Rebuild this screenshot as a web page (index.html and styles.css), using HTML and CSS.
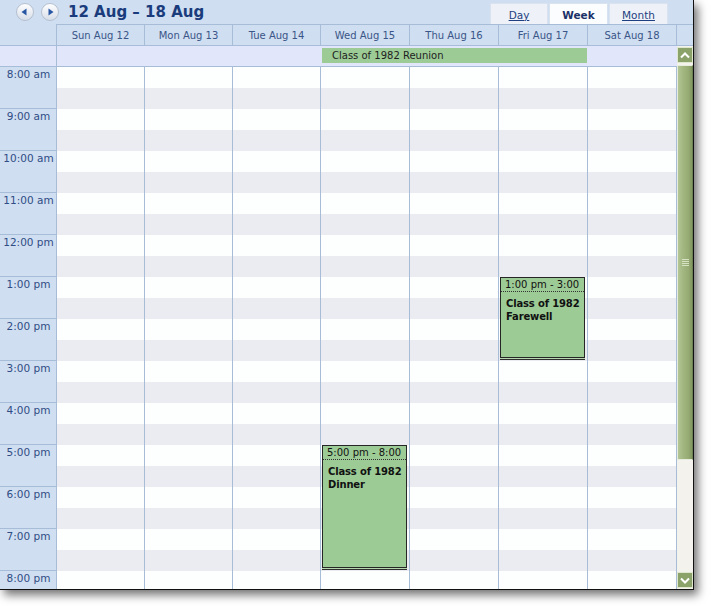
FILE: index.html
```html
<!DOCTYPE html>
<html lang="en">
<head>
<meta charset="utf-8">
<title>Week view</title>
<link rel="stylesheet" href="styles.css">
</head>
<body>
<div class="window">
  <div class="toolbar">
    <button class="nav" aria-label="Previous week">
      <svg width="18" height="18" viewBox="0 0 18 18"><defs><linearGradient id="g1" x1="0" y1="0" x2="0" y2="1"><stop offset="0" stop-color="#ffffff"/><stop offset="1" stop-color="#d6dde8"/></linearGradient></defs><circle cx="9" cy="9" r="8.5" fill="url(#g1)" stroke="#b3bfd0"/><path d="M5.5 9 L10.5 5.5 L10.5 12.5 Z" fill="#2856a3"/></svg>
    </button>
    <button class="nav" aria-label="Next week">
      <svg width="18" height="18" viewBox="0 0 18 18"><defs><linearGradient id="g2" x1="0" y1="0" x2="0" y2="1"><stop offset="0" stop-color="#ffffff"/><stop offset="1" stop-color="#d6dde8"/></linearGradient></defs><circle cx="9" cy="9" r="8.5" fill="url(#g2)" stroke="#b3bfd0"/><path d="M12.5 9 L7.5 5.5 L7.5 12.5 Z" fill="#2856a3"/></svg>
    </button>
    <h1 class="range">12 Aug – 18 Aug</h1>
    <div class="views">
      <a class="view" href="#">Day</a>
      <span class="view active">Week</span>
      <a class="view" href="#">Month</a>
    </div>
  </div>

  <div class="heads">
    <div class="corner"></div>
    <div class="day-heads">
      <div class="day-head">Sun Aug 12</div>
      <div class="day-head">Mon Aug 13</div>
      <div class="day-head">Tue Aug 14</div>
      <div class="day-head">Wed Aug 15</div>
      <div class="day-head">Thu Aug 16</div>
      <div class="day-head">Fri Aug 17</div>
      <div class="day-head">Sat Aug 18</div>
    </div>
    <div class="scroll-corner"></div>
  </div>

  <div class="main">
    <div class="allday-gutter"></div>
    <div class="allday">
      <div class="allday-event">Class of 1982 Reunion</div>
    </div>
    <div class="scrollbar">
      <div class="sb-btn"><svg width="10" height="7" viewBox="0 0 10 7"><path d="M1 5.5 L5 1.5 L9 5.5" fill="none" stroke="#ffffff" stroke-width="2"/></svg></div>
      <div class="sb-thumb"><span class="grip"></span></div>
      <div class="sb-track"></div>
      <div class="sb-btn"><svg width="10" height="7" viewBox="0 0 10 7"><path d="M1 1.5 L5 5.5 L9 1.5" fill="none" stroke="#ffffff" stroke-width="2"/></svg></div>
    </div>
    <div class="times">
      <div class="hour">8:00 am</div>
      <div class="hour">9:00 am</div>
      <div class="hour">10:00 am</div>
      <div class="hour">11:00 am</div>
      <div class="hour">12:00 pm</div>
      <div class="hour">1:00 pm</div>
      <div class="hour">2:00 pm</div>
      <div class="hour">3:00 pm</div>
      <div class="hour">4:00 pm</div>
      <div class="hour">5:00 pm</div>
      <div class="hour">6:00 pm</div>
      <div class="hour">7:00 pm</div>
      <div class="hour">8:00 pm</div>
    </div>
    <div class="days">
      <div class="day"></div>
      <div class="day"></div>
      <div class="day"></div>
      <div class="day">
        <div class="event" style="top:378px;height:123px">
          <div class="event-time">5:00 pm - 8:00</div>
          <div class="event-title">Class of 1982 Dinner</div>
        </div>
      </div>
      <div class="day"></div>
      <div class="day">
        <div class="event" style="top:210px;height:81px">
          <div class="event-time">1:00 pm - 3:00</div>
          <div class="event-title">Class of 1982 Farewell</div>
        </div>
      </div>
      <div class="day"></div>
    </div>
  </div>
</div>
</body>
</html>
```

FILE: styles.css
```css
* { box-sizing: border-box; }

html, body {
  margin: 0;
  padding: 0;
  background: #ffffff;
}

body {
  font-family: "DejaVu Sans", Verdana, sans-serif;
  font-size: 10px;
  color: #1a1a1a;
  min-height: 606px;
}

.window {
  width: 694px;
  height: 590px;
  background: #cfdef1;
  border-right: 1px solid #111111;
  border-bottom: 1px solid #111111;
  box-shadow: 4px 5px 9px rgba(0, 0, 0, 0.55);
  overflow: hidden;
  display: flex;
  flex-direction: column;
}

/* toolbar */
.toolbar {
  height: 24px;
  display: flex;
  align-items: center;
  padding-left: 16px;
  gap: 7px;
  flex: none;
}

.nav {
  width: 18px;
  height: 18px;
  padding: 0;
  margin: 0;
  border: 0;
  background: none;
  display: block;
}

.nav svg { display: block; }

.range {
  margin: 0 0 0 2px;
  font-size: 15px;
  font-weight: bold;
  color: #1a3c7c;
  line-height: 18px;
  white-space: nowrap;
}

.views {
  margin-left: auto;
  margin-right: 25px;
  align-self: flex-end;
  display: flex;
  gap: 1px;
}

.view {
  width: 59px;
  height: 21px;
  display: flex;
  align-items: center;
  justify-content: center;
  font-size: 10.5px;
  color: #1e3f80;
  background: #eef2f8;
  border: 1px solid #d9e3f0;
  border-bottom: 0;
  text-decoration: underline;
  padding-top: 1px;
}

.view:first-child { width: 58px; }

.view.active {
  background: #fcfdfe;
  font-weight: bold;
  text-decoration: none;
  color: #1a3268;
}

/* column heads */
.heads {
  height: 22px;
  display: grid;
  grid-template-columns: 57px 620px 16px;
  border-bottom: 1px solid #a7bcd7;
  flex: none;
}

.corner {
  border-right: 1px solid #a7bcd7;
}

.day-heads {
  display: grid;
  grid-template-columns: 88px 88px 88px 89px 89px 89px 89px;
  border-top: 1px solid #a7bcd7;
}

.day-head {
  border-right: 1px solid #a7bcd7;
  display: flex;
  align-items: center;
  justify-content: center;
  color: #3a5587;
  font-size: 10px;
  padding-top: 1px;
}

.scroll-corner {
  border-top: 1px solid #a7bcd7;
}

/* main area */
.main {
  flex: 1;
  display: grid;
  grid-template-columns: 57px 620px 16px;
  grid-template-rows: 21px 1fr;
  overflow: hidden;
}

.allday-gutter {
  background: #e1e6fb;
  border-right: 1px solid #a7bcd7;
  border-bottom: 1px solid #a7bcd7;
}

.allday {
  background: #e1e6fb;
  border-bottom: 1px solid #a7bcd7;
  display: grid;
  grid-template-columns: 88px 88px 88px 89px 89px 89px 89px;
  align-items: start;
}

.allday-event {
  grid-column: 4 / span 3;
  margin: 2px 1px 0 1px;
  height: 15px;
  background: #9dcb96;
  color: #1e1e1e;
  font-size: 10px;
  line-height: 15px;
  padding-left: 10px;
  white-space: nowrap;
}

/* scrollbar */
.scrollbar {
  grid-column: 3;
  grid-row: 1 / span 2;
  background: #f3f2ec;
  display: flex;
  flex-direction: column;
  padding-top: 1px;
  padding-bottom: 1px;
}

.sb-btn {
  height: 16px;
  flex: none;
  background: #8ba26b;
  border: 1px solid #dfe7cf;
  display: flex;
  align-items: center;
  justify-content: center;
}

.sb-thumb {
  margin-top: 2px;
  height: 395px;
  flex: none;
  border: 1px solid #e7eddc;
  border-right-color: #6e8355;
  background: linear-gradient(to right, #b3c596 0%, #a2b781 35%, #96ab74 75%, #82985f 100%);
  display: flex;
  align-items: center;
  justify-content: center;
}

.grip {
  width: 7px;
  height: 7px;
  background: repeating-linear-gradient(to bottom, #d7e2c2 0, #d7e2c2 1px, transparent 1px, transparent 2px);
}

.sb-track { flex: 1; }

/* time gutter */
.times {
  grid-column: 1;
  grid-row: 2;
  border-right: 1px solid #a7bcd7;
  overflow: hidden;
}

.hour {
  height: 42px;
  border-bottom: 1px solid #a7bcd7;
  color: #2f4d84;
  font-size: 10.5px;
  text-align: center;
  padding-top: 1px;
  padding-left: 1px;
  white-space: nowrap;
}

/* day grid */
.days {
  grid-column: 2;
  grid-row: 2;
  display: grid;
  grid-template-columns: 88px 88px 88px 89px 89px 89px 89px;
  background: repeating-linear-gradient(to bottom, #fdfefe 0, #fdfefe 21px, #eaecf2 21px, #eaecf2 42px);
  overflow: hidden;
}

.day {
  border-right: 1px solid #a7bcd7;
  position: relative;
}

.event {
  position: absolute;
  left: 1px;
  right: 2px;
  background: #9dcb96;
  border: 1px solid #262626;
  box-shadow: 0 1px 0 #b6d6af, 0 2px 0 #2e2e2e;
  overflow: hidden;
}

.event-time {
  height: 14px;
  border-bottom: 1px dotted #333333;
  padding-left: 4px;
  font-size: 10px;
  line-height: 13px;
  white-space: nowrap;
  overflow: hidden;
  color: #111111;
}

.event-title {
  padding: 5px 0 0 5px;
  font-size: 10px;
  font-weight: bold;
  line-height: 13px;
  letter-spacing: -0.15px;
  color: #111111;
}
```
